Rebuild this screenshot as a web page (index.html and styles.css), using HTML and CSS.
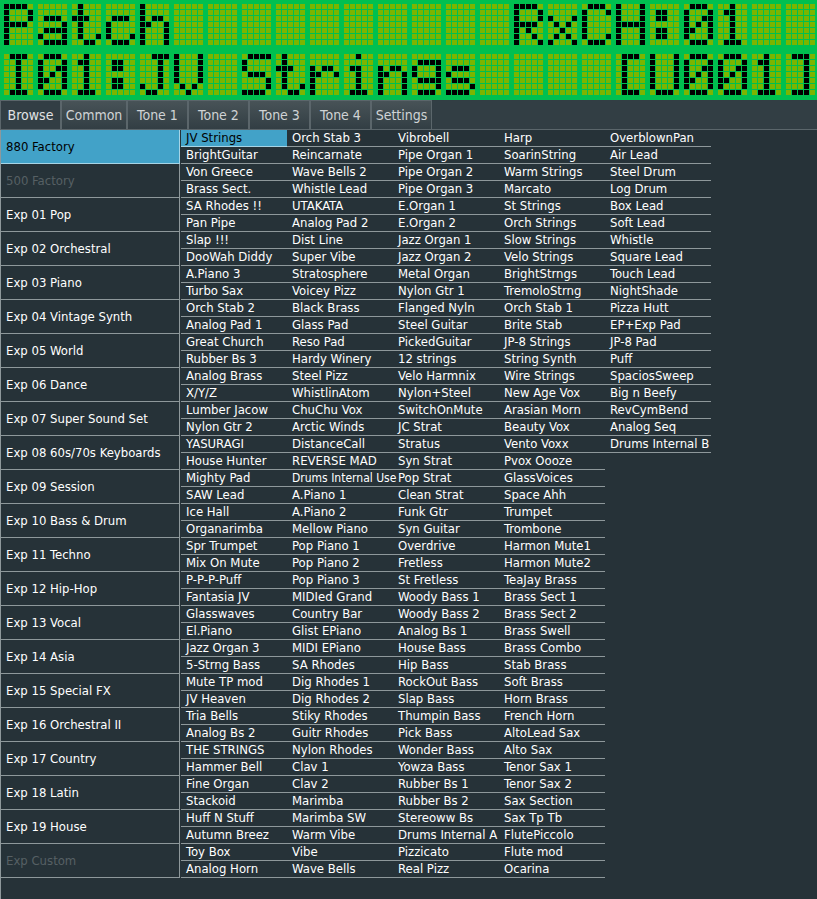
FILE: index.html
```html
<!DOCTYPE html>
<html lang="en">
<head>
<meta charset="utf-8">
<title>Patch Browser</title>
<link rel="stylesheet" href="styles.css">
</head>
<body>
<header id="lcd" class="lcd"></header>
<nav class="tabs" aria-label="Pages">
<button class="tab tab-active" type="button">Browse</button>
<button class="tab tab-wide" type="button">Common</button>
<button class="tab" type="button">Tone 1</button>
<button class="tab" type="button">Tone 2</button>
<button class="tab" type="button">Tone 3</button>
<button class="tab" type="button">Tone 4</button>
<button class="tab" type="button">Settings</button>
</nav>
<main class="browser">
<ul id="banks" class="banks"></ul>
<div id="patches" class="patches"></div>
</main>
<script src="app.js"></script>
</body>
</html>
```
FILE: styles.css
```css
* { box-sizing: border-box; }
body {
  margin: 0;
  min-height: 100vh;
  display: flex;
  flex-direction: column;
  background: #263238;
  color: #fff;
  font: 13px/16px "DejaVu Sans Condensed", "DejaVu Sans", sans-serif;
  font-stretch: condensed;
}
button { font: inherit; color: inherit; border: 0; margin: 0; background: none; cursor: pointer; }
.lcd { background: #00c050; overflow: hidden; }
.lcd svg { display: block; width: 100%; }
.lcd-on { fill: #000; }
.lcd-off { fill: #7cb500; }
.tabs { display: flex; height: 30px; background: #323e44; border-bottom: 1px solid #5b666b; }
.tab {
  width: 61px;
  padding: 0;
  font-size: 14px;
  color: #d0d3d5;
  background: linear-gradient(#485357, #323e44);
  border: 1px solid #5b666b;
  border-bottom: 0;
}
.tab-wide { width: 66px; }
.tab-active { background: #323e44; color: #e0e2e3; }
.browser { display: flex; flex: 1; border-left: 1px solid #8e989b; }
.banks { list-style: none; margin: 0; padding: 0; width: 179px; }
.bank {
  display: block;
  width: 100%;
  height: 34px;
  padding: 0 5px;
  text-align: left;
  border-right: 1px solid #8e989b;
  border-bottom: 1px solid #8e989b;
}
.bank:disabled { color: #566064; }
.bank-selected { background: #42a2c8; color: #000; border-color: #a6d4e6; }
.patches { display: flex; align-items: flex-start; margin-left: 1px; }
.patch-column { list-style: none; margin: 0; padding: 0; width: 106px; }
.patch {
  display: block;
  width: 100%;
  height: 17px;
  padding: 0 0 0 5px;
  text-align: left;
  white-space: nowrap;
  border-bottom: 1px solid #8e989b;
}
.patch-selected { background: #42a2c8; color: #000; border-color: #a6d4e6; }
.patch-long { font-size: 12px; }
```
FILE: app.js
```js
// Rows of each 5x7 character cell, most significant bit on the left.
const glyphs = {
  " ": [0, 0, 0, 0, 0, 0, 0],
  P: [30, 17, 17, 30, 16, 16, 16],
  a: [0, 0, 14, 1, 15, 17, 15],
  t: [8, 8, 28, 8, 8, 9, 6],
  c: [0, 0, 14, 16, 16, 17, 14],
  h: [16, 16, 22, 25, 17, 17, 17],
  R: [30, 17, 17, 30, 20, 18, 17],
  x: [0, 0, 17, 10, 4, 10, 17],
  C: [14, 17, 16, 16, 16, 17, 14],
  H: [17, 17, 17, 31, 17, 17, 17],
  ":": [0, 12, 12, 0, 12, 12, 0],
  0: [14, 17, 19, 21, 25, 17, 14],
  1: [4, 12, 4, 4, 4, 4, 14],
  I: [14, 4, 4, 4, 4, 4, 14],
  J: [7, 2, 2, 2, 2, 18, 12],
  V: [17, 17, 17, 17, 17, 10, 4],
  S: [15, 16, 16, 14, 1, 1, 30],
  r: [0, 0, 22, 25, 16, 16, 16],
  i: [4, 0, 12, 4, 4, 4, 14],
  n: [0, 0, 22, 25, 17, 17, 17],
  g: [0, 15, 17, 17, 15, 1, 14],
  s: [0, 0, 14, 16, 14, 1, 30],
  "[": [14, 8, 8, 8, 8, 8, 14],
  U: [17, 17, 17, 17, 17, 17, 14],
  "]": [14, 2, 2, 2, 2, 2, 14]
};
const lines = ["Patch          RxCH:01  ", "I01:JV Strings    [U001]"];
let dots = "";
lines.forEach((line, row) => {
  [...line].forEach((char, col) => {
    glyphs[char].forEach((bits, y) => {
      for (let x = 0; x < 5; x++) {
        const state = (bits >> (4 - x)) & 1 ? "on" : "off";
        dots += `<rect class="lcd-${state}" x="${4 + col * 34 + x * 6}" y="${4 + row * 50 + y * 6}" width="5" height="5"/>`;
      }
    });
  });
});
document.getElementById("lcd").innerHTML =
  `<svg viewBox="0 0 817 100" shape-rendering="crispEdges" role="img" aria-label="${lines.join(" ")}">${dots}</svg>`;

const banks = ["880 Factory", "500 Factory", "Exp 01 Pop", "Exp 02 Orchestral", "Exp 03 Piano", "Exp 04 Vintage Synth",
  "Exp 05 World", "Exp 06 Dance", "Exp 07 Super Sound Set", "Exp 08 60s/70s Keyboards", "Exp 09 Session",
  "Exp 10 Bass & Drum", "Exp 11 Techno", "Exp 12 Hip-Hop", "Exp 13 Vocal", "Exp 14 Asia", "Exp 15 Special FX",
  "Exp 16 Orchestral II", "Exp 17 Country", "Exp 18 Latin", "Exp 19 House", "Exp Custom"];
const unavailable = ["500 Factory", "Exp Custom"];

const columns = [
  "JV Strings|BrightGuitar|Von Greece|Brass Sect.|SA Rhodes !!|Pan Pipe|Slap !!!|DooWah Diddy|A.Piano 3|Turbo Sax|Orch Stab 2|Analog Pad 1|Great Church|Rubber Bs 3|Analog Brass|X/Y/Z|Lumber Jacow|Nylon Gtr 2|YASURAGI|House Hunter|Mighty Pad|SAW Lead|Ice Hall|Organarimba|Spr Trumpet|Mix On Mute|P-P-P-Puff|Fantasia JV|Glasswaves|El.Piano|Jazz Organ 3|5-Strng Bass|Mute TP mod|JV Heaven|Tria Bells|Analog Bs 2|THE STRINGS|Hammer Bell|Fine Organ|Stackoid|Huff N Stuff|Autumn Breez|Toy Box|Analog Horn",
  "Orch Stab 3|Reincarnate|Wave Bells 2|Whistle Lead|UTAKATA|Analog Pad 2|Dist Line|Super Vibe|Stratosphere|Voicey Pizz|Black Brass|Glass Pad|Reso Pad|Hardy Winery|Steel Pizz|WhistlinAtom|ChuChu Vox|Arctic Winds|DistanceCall|REVERSE MAD|Drums Internal Use|A.Piano 1|A.Piano 2|Mellow Piano|Pop Piano 1|Pop Piano 2|Pop Piano 3|MIDIed Grand|Country Bar|Glist EPiano|MIDI EPiano|SA Rhodes|Dig Rhodes 1|Dig Rhodes 2|Stiky Rhodes|Guitr Rhodes|Nylon Rhodes|Clav 1|Clav 2|Marimba|Marimba SW|Warm Vibe|Vibe|Wave Bells",
  "Vibrobell|Pipe Organ 1|Pipe Organ 2|Pipe Organ 3|E.Organ 1|E.Organ 2|Jazz Organ 1|Jazz Organ 2|Metal Organ|Nylon Gtr 1|Flanged Nyln|Steel Guitar|PickedGuitar|12 strings|Velo Harmnix|Nylon+Steel|SwitchOnMute|JC Strat|Stratus|Syn Strat|Pop Strat|Clean Strat|Funk Gtr|Syn Guitar|Overdrive|Fretless|St Fretless|Woody Bass 1|Woody Bass 2|Analog Bs 1|House Bass|Hip Bass|RockOut Bass|Slap Bass|Thumpin Bass|Pick Bass|Wonder Bass|Yowza Bass|Rubber Bs 1|Rubber Bs 2|Stereoww Bs|Drums Internal A|Pizzicato|Real Pizz",
  "Harp|SoarinString|Warm Strings|Marcato|St Strings|Orch Strings|Slow Strings|Velo Strings|BrightStrngs|TremoloStrng|Orch Stab 1|Brite Stab|JP-8 Strings|String Synth|Wire Strings|New Age Vox|Arasian Morn|Beauty Vox|Vento Voxx|Pvox Oooze|GlassVoices|Space Ahh|Trumpet|Trombone|Harmon Mute1|Harmon Mute2|TeaJay Brass|Brass Sect 1|Brass Sect 2|Brass Swell|Brass Combo|Stab Brass|Soft Brass|Horn Brass|French Horn|AltoLead Sax|Alto Sax|Tenor Sax 1|Tenor Sax 2|Sax Section|Sax Tp Tb|FlutePiccolo|Flute mod|Ocarina",
  "OverblownPan|Air Lead|Steel Drum|Log Drum|Box Lead|Soft Lead|Whistle|Square Lead|Touch Lead|NightShade|Pizza Hutt|EP+Exp Pad|JP-8 Pad|Puff|SpaciosSweep|Big n Beefy|RevCymBend|Analog Seq|Drums Internal B"
].map(column => column.split("|"));

function item(name, kind, selected, disabled) {
  const li = document.createElement("li");
  const button = document.createElement("button");
  button.type = "button";
  button.textContent = name;
  button.className = kind;
  if (selected) button.classList.add(`${kind}-selected`);
  if (kind === "patch" && name.length > 16) button.classList.add("patch-long");
  button.disabled = disabled;
  li.append(button);
  return li;
}

document.getElementById("banks").append(
  ...banks.map((name, i) => item(name, "bank", i === 0, unavailable.includes(name))));

columns.forEach((names, c) => {
  const list = document.createElement("ul");
  list.className = "patch-column";
  list.append(...names.map((name, i) => item(name, "patch", c === 0 && i === 0, false)));
  document.getElementById("patches").append(list);
});
```
